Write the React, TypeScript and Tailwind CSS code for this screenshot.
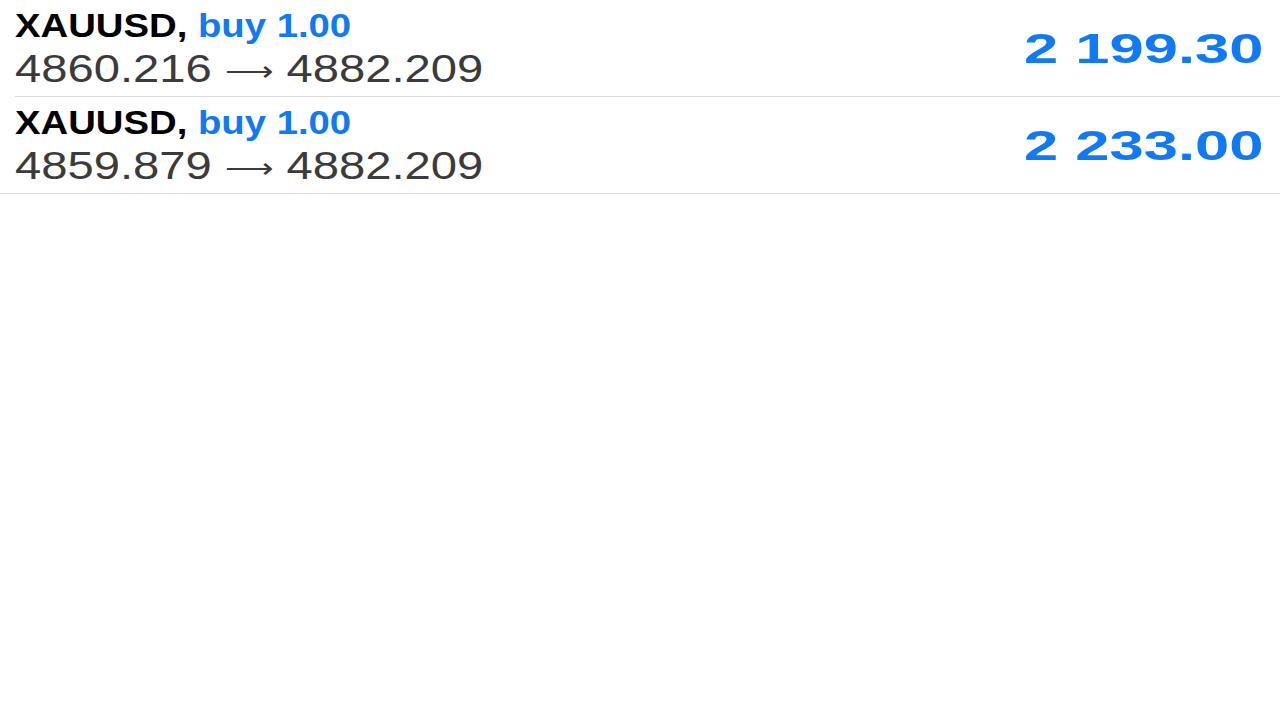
const positions = [
  { symbol: "XAUUSD", side: "buy 1.00", open: "4860.216", current: "4882.209", profit: "2 199.30", inset: true },
  { symbol: "XAUUSD", side: "buy 1.00", open: "4859.879", current: "4882.209", profit: "2 233.00", inset: false },
];

const App = () => (
  <div className="min-h-screen bg-white font-['Liberation_Sans',Arial,sans-serif]">
    {positions.map((p, i) => (
      <div key={i} className={p.inset ? "pl-[15px]" : ""}>
        <div
          className={`flex items-center justify-between h-[97px] border-b border-[#dcdcdc] pr-[17px] ${
            p.inset ? "" : "pl-[15px]"
          }`}
        >
          {/* left column */}
          <div className="flex flex-col items-start pt-[5px]">
            <div className="inline-block origin-left scale-x-[1.16] text-[33px] leading-[40px] font-bold whitespace-nowrap">
              <span className="text-black">{p.symbol},</span>{" "}
              <span className="text-[#1179f2]">{p.side}</span>
            </div>
            <div className="inline-block origin-left scale-x-[1.21] text-[39px] leading-[46px] text-[#3b3b3b] whitespace-nowrap">
              {p.open}{" "}
              <span className="relative -top-[1px] font-['DejaVu_Sans',sans-serif] font-light text-[28px]">⟶</span>{" "}
              {p.current}
            </div>
          </div>

          {/* profit */}
          <div className="inline-block origin-right scale-x-[1.43] text-[43px] font-bold text-[#1179f2] whitespace-nowrap">
            {p.profit}
          </div>
        </div>
      </div>
    ))}
  </div>
);

export default App;
